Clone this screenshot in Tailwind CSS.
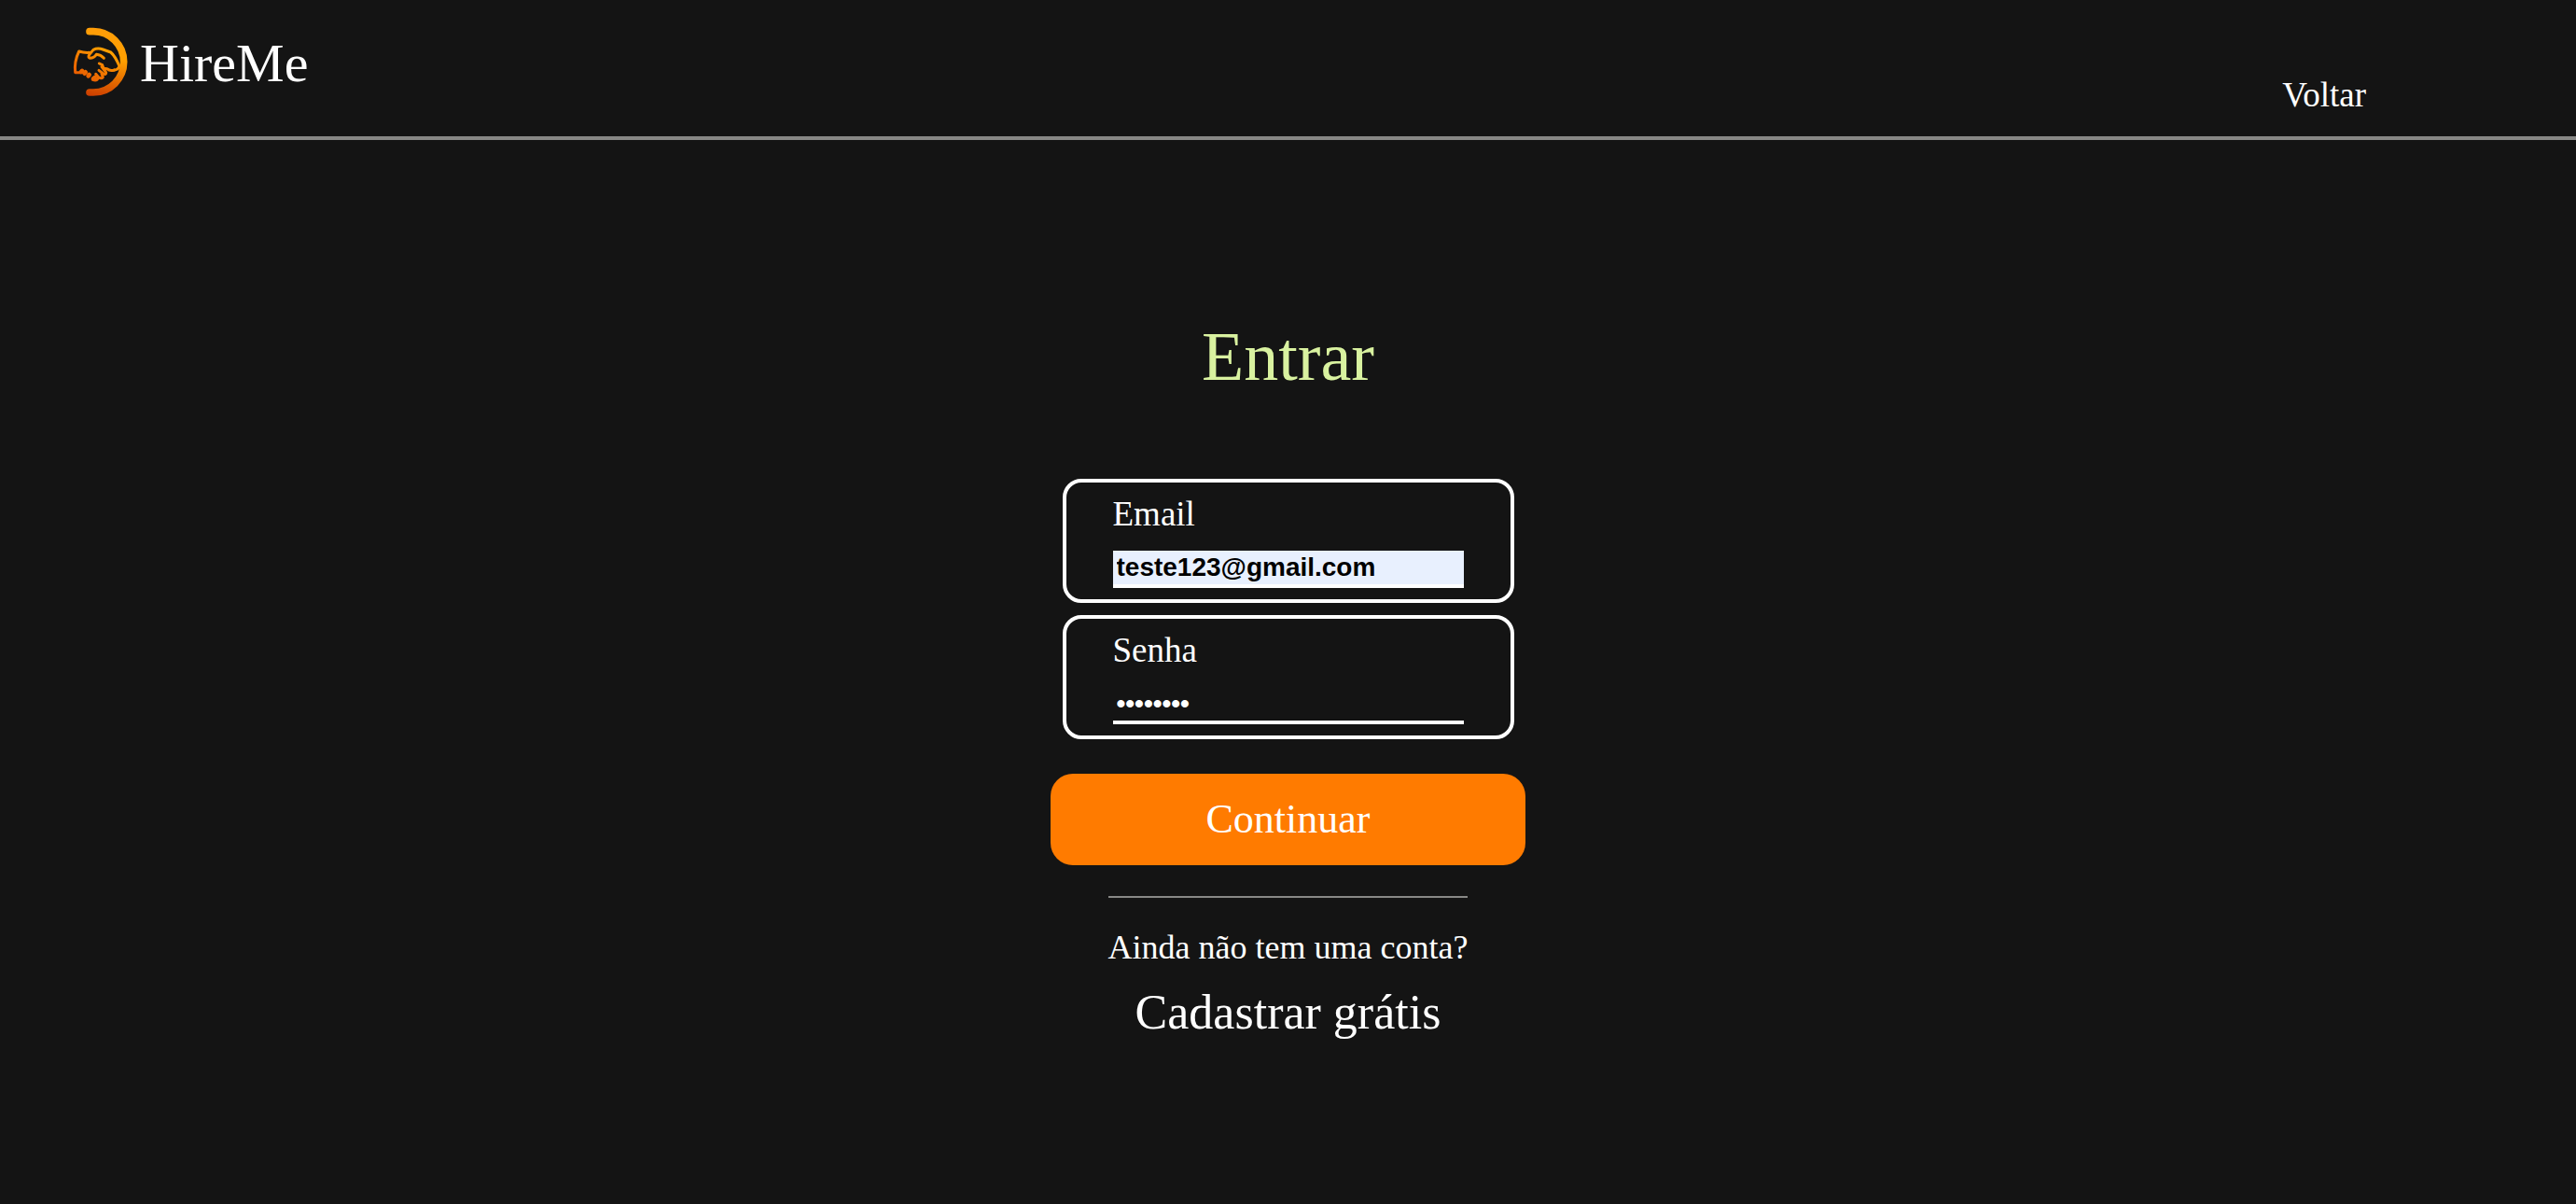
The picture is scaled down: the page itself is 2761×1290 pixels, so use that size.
<!DOCTYPE html>
<html lang="pt-BR">
<head>
<meta charset="utf-8">
<meta name="viewport" content="width=device-width, initial-scale=1">
<title>HireMe - Entrar</title>
<script src="https://cdn.jsdelivr.net/npm/@tailwindcss/browser@4"></script>
</head>
<body class="min-h-screen bg-[#141414] text-white font-['Liberation_Serif',serif]">
<header class="flex h-[150px] items-start justify-between border-b-4 border-[#888886] pl-[77px] pr-[225px]">
  <a href="#" class="flex items-start gap-3 pt-7">
    <!-- handshake inside an open ring -->
    <svg class="h-[76px] w-[61px]" viewBox="50 40 183 228" fill="none" stroke="url(#g)" stroke-linecap="round" stroke-linejoin="round" aria-hidden="true">
      <defs>
        <linearGradient id="g" gradientUnits="userSpaceOnUse" x1="150" y1="50" x2="110" y2="265">
          <stop offset="0" stop-color="#ff9d08"/><stop offset=".4" stop-color="#ffa000"/><stop offset="1" stop-color="#cc3d00"/>
        </linearGradient>
        <linearGradient id="h" gradientUnits="userSpaceOnUse" x1="150" y1="110" x2="90" y2="215">
          <stop offset="0" stop-color="#ffa000"/><stop offset="1" stop-color="#e85a00"/>
        </linearGradient>
      </defs>
      <path stroke-width="23" d="M107 57h12a98 98 0 0 1 0 196h-12"/>
      <g stroke="url(#h)" stroke-width="9">
        <path d="M106 125Q88 126 73 121Q57 154 61 189L77 189"/>
        <path d="M153 143Q143 132 129 131Q122 143 108 143Q101 141 106 132L119 116Q133 109 150 115L175 124Q190 137 203 169Q198 181 187 181"/>
        <path d="M138 160L148 165L152 176L163 177Q172 186 187 181M146 171L160 189Q160 197 151 193L137 182M146 194L150 204Q145 210 136 204L127 194M134 207Q130 217 117 212"/>
        <path stroke-width="14" d="M80 187l3-3M91 192l3-4M103 200l3-4M119 209l5-4"/>
      </g>
    </svg>
    <span class="pt-2 text-[58px] leading-[64px]">HireMe</span>
  </a>
  <a href="#" class="pt-20 text-[37px] leading-[44px]">Voltar</a>
</header>
<main class="flex flex-col items-center px-4 pt-48">
  <h1 class="text-[74px] leading-[80px] text-[#d9f2a0]">Entrar</h1>
  <form class="mt-[91px] flex w-full flex-col items-center">
    <div class="flex w-full max-w-[484px] flex-col gap-[13px]">
      <div class="flex flex-col rounded-[20px] border-4 border-white px-[50px] py-3">
        <label for="email" class="text-[37px] leading-[44px]">Email</label>
        <input id="email" type="email" value="teste123@gmail.com" class="mt-[17px] h-10 w-full border-b-4 border-white bg-[#e8f0fe] px-1 font-['Liberation_Sans',sans-serif] text-[28px] font-bold text-black outline-none">
      </div>
      <div class="flex flex-col rounded-[20px] border-4 border-white px-[50px] py-3">
        <label for="senha" class="text-[37px] leading-[44px]">Senha</label>
        <input id="senha" type="password" value="teste123" class="mt-[17px] h-10 w-full border-b-4 border-white bg-transparent px-1 font-['Liberation_Sans',sans-serif] text-[28px] font-bold text-white outline-none">
      </div>
    </div>
    <button type="submit" class="mt-[37px] h-[98px] w-full max-w-[509px] rounded-3xl bg-[#ff7b00] text-[44px]">Continuar</button>
  </form>
  <hr class="mt-[33px] w-full max-w-[385px] border-t-2 border-[#888886]">
  <p class="mt-[33px] text-[36px] leading-[40px]">Ainda não tem uma conta?</p>
  <a href="#" class="mt-5 text-[52px] leading-[60px]">Cadastrar grátis</a>
</main>
</body>
</html>
